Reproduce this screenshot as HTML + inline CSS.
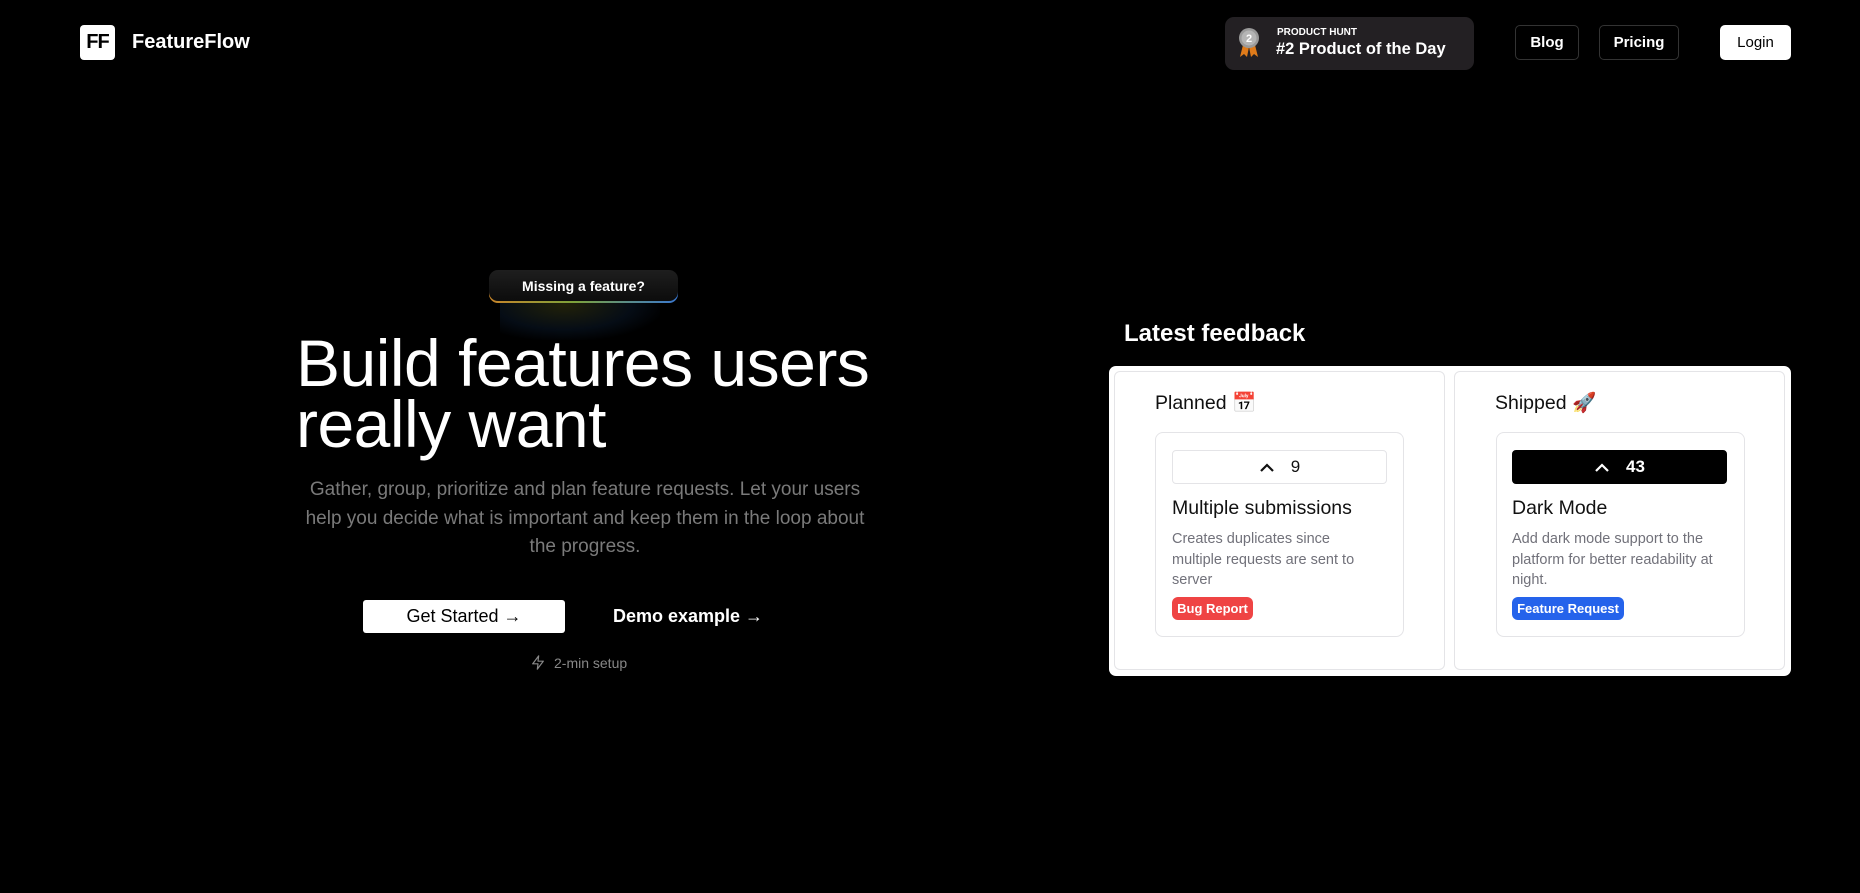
<!DOCTYPE html>
<html><head><meta charset="utf-8"><style>
*{box-sizing:border-box;margin:0;padding:0}
body{width:1860px;height:893px;background:#000;font-family:"Liberation Sans",sans-serif;color:#fff;position:relative;overflow:hidden}
.a{position:absolute}
.logo{left:80px;top:25px;width:35px;height:35px;background:#fff;border-radius:4px;color:#000;font-weight:700;font-size:20px;display:flex;align-items:center;justify-content:center;letter-spacing:-1px}
.brand{left:132px;top:31px;font-size:20px;font-weight:700}
.ph{left:1225px;top:17px;width:249px;height:53px;background:#232023;border-radius:9px}
.nb{top:25px;height:35px;border:1px solid #333;border-radius:5px;display:flex;align-items:center;justify-content:center;font-size:15px;font-weight:700}
.pill{left:489px;top:270px;width:189px;height:31px;border-radius:9px;background:linear-gradient(#1e1e1e,#0c0c0c);font-size:14px;font-weight:700;display:flex;align-items:center;justify-content:center}
h1{position:absolute;left:296px;top:333px;font-size:66px;font-weight:400;line-height:61px;letter-spacing:-.5px}
.p{left:300px;top:476px;width:570px;text-align:center;color:#7a7a7a;font-size:19px;line-height:28.5px}
.col{background:#fff;border:1px solid #e4e4e7;border-radius:6px}
.card{border:1px solid #e4e4e7;border-radius:8px;background:#fff}
.vote{border:1px solid #e4e4e7;border-radius:4px;display:flex;align-items:center;justify-content:center;gap:16px;font-size:17px;color:#111}
.t{font-size:19.5px;color:#111}
.d{font-size:14.5px;line-height:20.5px;color:#71717a;width:205px}
.bd{height:23px;border-radius:6px;color:#fff;font-size:13px;font-weight:700;display:flex;align-items:center;justify-content:center}
</style></head><body>
<div class="a logo">FF</div>
<div class="a brand">FeatureFlow</div>
<div class="a ph">
  <svg class="a" style="left:13px;top:10px" width="22" height="32" viewBox="0 0 22 32"><path d="M5 18 L2 30 L6 27 L9 30 L11 20Z M17 18 L20 30 L16 27 L13 30 L11 20Z" fill="#e07b1a"/><circle cx="11" cy="11" r="10" fill="#9a9a9a"/><circle cx="11" cy="11" r="7.5" fill="#b5b5b5"/><text x="11" y="15" font-size="11" font-weight="700" text-anchor="middle" fill="#fff" font-family="Liberation Sans">2</text></svg>
  <div class="a" style="left:52px;top:10px;font-size:10px;font-weight:700">PRODUCT HUNT</div>
  <div class="a" style="left:51px;top:23px;font-size:16.5px;font-weight:700">#2 Product of the Day</div>
</div>
<div class="a nb" style="left:1515px;width:64px">Blog</div>
<div class="a nb" style="left:1599px;width:80px">Pricing</div>
<div class="a nb" style="left:1720px;width:71px;background:#fff;color:#000;font-weight:400;border-color:#fff">Login</div>

<div class="a" style="left:500px;top:290px;width:160px;height:50px;background:radial-gradient(ellipse at 40% 30%,rgba(110,110,30,.3),rgba(30,70,120,.18) 50%,transparent 75%)"></div>
<div class="a" style="left:489px;top:272px;width:189px;height:31px;border-radius:9px;background:linear-gradient(90deg,#c8852a,#7da23a 45%,#3a78d0)"></div>
<div class="a pill">Missing a feature?</div>
<h1>Build features users<br>really want</h1>
<div class="a p">Gather, group, prioritize and plan feature requests. Let your users help you decide what is important and keep them in the loop about the progress.</div>
<div class="a" style="left:363px;top:600px;width:202px;height:33px;background:#fff;border-radius:3px;color:#000;font-size:18px;display:flex;align-items:center;justify-content:center">Get Started →</div>
<div class="a" style="left:613px;top:606px;font-size:18px;font-weight:700">Demo example →</div>
<div class="a" style="left:530px;top:654px;font-size:14px;color:#888;display:flex;align-items:center;gap:8px"><svg width="16" height="17" viewBox="0 0 24 24" fill="none" stroke="#888" stroke-width="1.8" stroke-linejoin="round"><path d="M13 2 L4 14 H12 L11 22 L20 10 H12 Z"/></svg>2-min setup</div>

<div class="a" style="left:1124px;top:320px;font-size:24px;font-weight:700">Latest feedback</div>
<div class="a" style="left:1109px;top:366px;width:682px;height:310px;background:#fff;border-radius:7px"></div>
<div class="a col" style="left:1114px;top:371px;width:331px;height:299px"></div>
<div class="a col" style="left:1454px;top:371px;width:331px;height:299px"></div>
<div class="a t" style="left:1155px;top:391px">Planned 📅</div>
<div class="a t" style="left:1495px;top:391px">Shipped 🚀</div>

<div class="a card" style="left:1155px;top:432px;width:249px;height:205px"></div>
<div class="a vote" style="left:1172px;top:450px;width:215px;height:34px"><svg width="16" height="10" viewBox="0 0 16 10"><path d="M2 9 L8 3 L14 9" stroke="#111" stroke-width="2.2" fill="none"/></svg>9</div>
<div class="a t" style="left:1172px;top:497px">Multiple submissions</div>
<div class="a d" style="left:1172px;top:529px;width:190px">Creates duplicates since multiple requests are sent to server</div>
<div class="a bd" style="left:1172px;top:597px;width:81px;background:#ef4444">Bug Report</div>

<div class="a card" style="left:1496px;top:432px;width:249px;height:205px"></div>
<div class="a vote" style="left:1512px;top:450px;width:215px;height:34px;background:#000;border-color:#000;color:#fff;font-weight:700"><svg width="16" height="10" viewBox="0 0 16 10"><path d="M2 9 L8 3 L14 9" stroke="#fff" stroke-width="2.2" fill="none"/></svg>43</div>
<div class="a t" style="left:1512px;top:497px">Dark Mode</div>
<div class="a d" style="left:1512px;top:529px">Add dark mode support to the platform for better readability at night.</div>
<div class="a bd" style="left:1512px;top:597px;width:112px;background:#2563eb">Feature Request</div>
</body></html>
